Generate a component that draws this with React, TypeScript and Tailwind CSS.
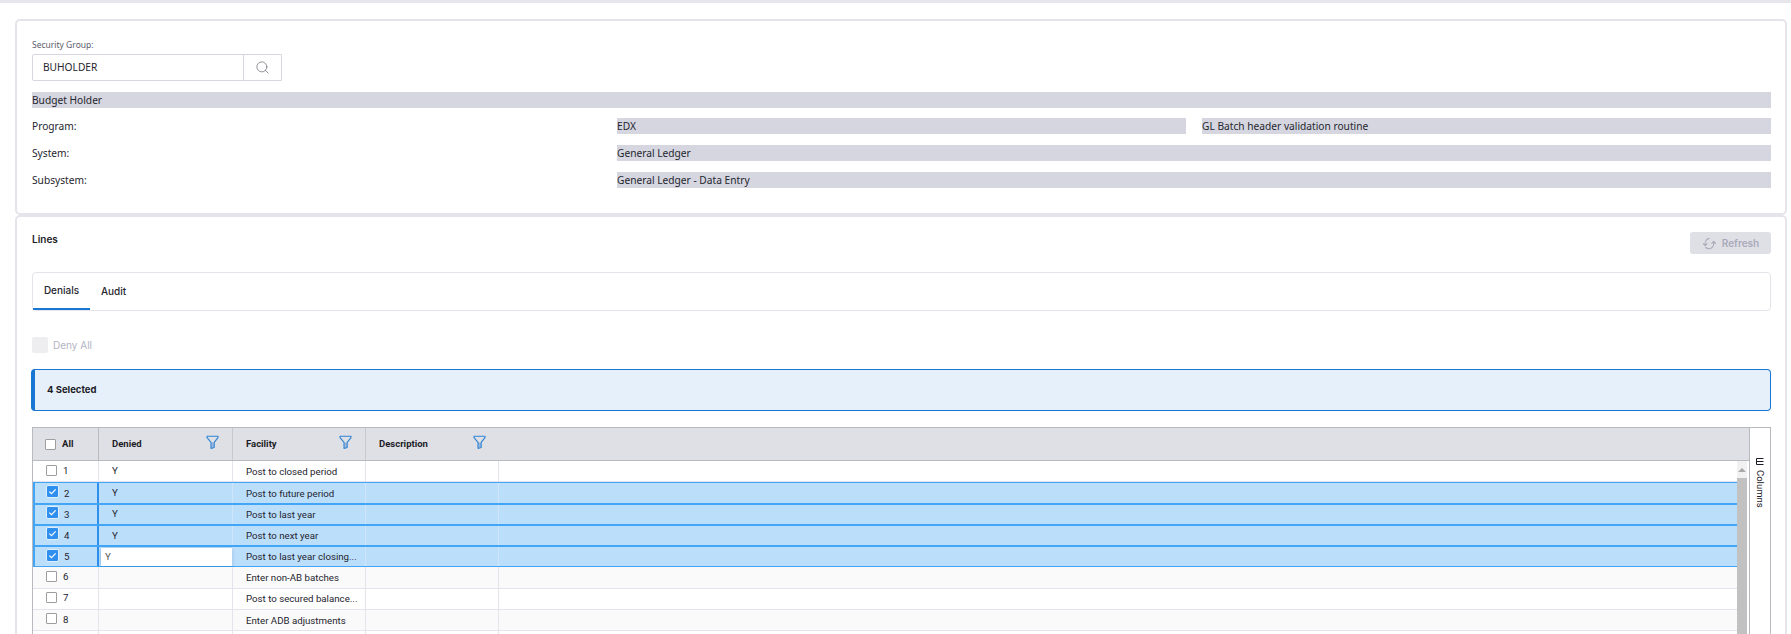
import React from "react";
import { Search } from "lucide-react";

const rows = [
  { n: 1, denied: "Y", fac: "Post to closed period", sel: false },
  { n: 2, denied: "Y", fac: "Post to future period", sel: true },
  { n: 3, denied: "Y", fac: "Post to last year", sel: true },
  { n: 4, denied: "Y", fac: "Post to next year", sel: true },
  { n: 5, denied: "Y", fac: "Post to last year closing...", sel: true, edit: true },
  { n: 6, denied: "", fac: "Enter non-AB batches", sel: false },
  { n: 7, denied: "", fac: "Post to secured balance...", sel: false },
  { n: 8, denied: "", fac: "Enter ADB adjustments", sel: false },
];

function Funnel() {
  return (
    <svg width="13" height="14" viewBox="0 0 13 14" fill="none" className="shrink-0">
      <path d="M5 7.5h3v4.5L5.2 13z" fill="#9db8d8" />
      <path d="M1 1.2h11v1.4L8.2 7.4v5L5 13.4V7.4L1 2.6z" stroke="#2d83d6" strokeWidth="1.1" strokeLinejoin="round" />
    </svg>
  );
}

function RefreshGlyph() {
  return (
    <svg width="15" height="15" viewBox="0 0 15 15" fill="none" stroke="#a9a9ba" strokeWidth="1.1" strokeLinecap="round" strokeLinejoin="round">
      <path d="M3.2 9.5C2.4 6 4.4 3.2 7 2.4" />
      <path d="M1.4 7.6l1.8 2 1.9-1.9" />
      <path d="M11.6 5.5c.9 3.6-1 6.5-3.8 7.2-1.5.3-3-.2-4-1.2" />
      <path d="M9.8 7.3l1.8-1.9 1.8 2" />
    </svg>
  );
}

function ColumnsGlyph() {
  return (
    <svg width="8" height="7" viewBox="0 0 8 7" fill="none" stroke="#1c1c28" strokeWidth="1" className="shrink-0">
      <path d="M.5.5h7M.5 3.5h7M.5 6.5h7M.5.5v6" />
    </svg>
  );
}

function HeadCell({ label, w }: { label: string; w: string }) {
  return (
    <div className={`${w} h-full shrink-0 flex items-center justify-between pl-[13px] pr-[13px] border-r border-[#c8c9d0]`}>
      <span className="text-[9.5px] font-bold text-[#1c1c28] font-['Roboto',sans-serif]">{label}</span>
      <div className="-mt-[5px]"><Funnel /></div>
    </div>
  );
}

function Check({ on }: { on: boolean }) {
  return on ? (
    <span className="w-[11px] h-[11px] rounded-[1px] bg-[#2f8fee] flex items-center justify-center -mt-[3px] shadow-[0_0_0_0.5px_#ffffff]">
      <svg width="9" height="9" viewBox="0 0 10 10" fill="none" stroke="white" strokeWidth="1.3"><path d="M1.5 5.2l2.4 2.2 4.6-4.8" /></svg>
    </span>
  ) : (
    <span className="w-[11px] h-[11px] border border-[#9e9e9e] bg-white rounded-[1px] -mt-[2px] block" />
  );
}

function GridRow({ r }: { r: (typeof rows)[number] }) {
  const line = r.sel ? "border-[#cfe6fa]" : "border-[#e4e5ec]";
  const even = r.n % 2 === 0;
  return (
    <div
      className={`h-[21.25px] shrink-0 flex items-stretch text-[9.7px] text-[#24242e] font-['Roboto',sans-serif] ${
        r.sel
          ? "bg-[#bbdefb] border-y border-[#42a5f5]"
          : even
            ? "bg-[#fafafa] border-b border-[#e4e5ec]"
            : "bg-white border-b border-[#e4e5ec]"
      }`}
    >
      <div className={`w-[66px] shrink-0 flex items-center gap-[6px] ${r.sel ? "pl-[12px] border-l-2 border-l-[#42a5f5] border-r-2 border-r-[#2f8fee]" : "pl-[13px] border-r border-[#e4e5ec]"}`}>
        <Check on={r.sel} />
        <span className={r.sel ? "pt-[2px]" : ""}>{r.n}</span>
      </div>
      <div className={`w-[134px] shrink-0 flex items-center pt-[1px] border-r ${line} ${r.edit ? "pl-[2px] pr-0" : "pl-[13px]"}`}>
        {r.edit ? (
          <span className="w-full h-[18px] bg-white flex items-center pl-[4px] shadow-[0_1px_3px_rgba(33,110,190,0.45)] text-[#555]">Y</span>
        ) : (
          r.denied
        )}
      </div>
      <div className={`w-[133px] shrink-0 flex items-center pt-[2px] pl-[13px] border-r ${line}`}>{r.fac}</div>
      <div className={`w-[133px] shrink-0 border-r ${line}`} />
      <div className="flex-1" />
    </div>
  );
}

function Bar({ text, cls = "" }: { text: string; cls?: string }) {
  return <div className={`h-[16px] bg-[#d5d6e0] text-[10.2px] leading-[16px] text-[#26262e] ${cls}`}>{text}</div>;
}

function InfoRow({ label, children, first }: { label: string; children: React.ReactNode; first?: boolean }) {
  return (
    <div className={`flex items-center h-[16px] text-[10.2px] text-[#26262e] ${first ? "mt-[10px]" : "mt-[11px]"}`}>
      <div className="w-[585px] shrink-0 pt-[1px]">{label}</div>
      <div className="flex-1 flex gap-[16px]">{children}</div>
    </div>
  );
}

export default function App() {
  return (
    <div className="h-[634px] w-[1791px] overflow-hidden bg-white border-t-[3px] border-[#e6e6ec] font-['Noto_Sans',sans-serif]">
      <div className="pl-[15px] pr-[4px] pt-[16px]">
        <section className="h-[196px] border-2 border-[#e4e4ea] rounded-[5px] pl-[15px] pr-[14px] pt-[18px]">
          <div className="text-[8.5px] leading-[12px] text-[#5c5c6c]">Security Group:</div>
          <div className="mt-[3px] w-[250px] h-[27px] flex border border-[#d5d6e0] rounded-l-[2px]">
            <div className="flex-1 pl-[10px] text-[10.2px] leading-[25px] text-[#26262e]">BUHOLDER</div>
            <div className="w-[38px] border-l border-[#d5d6e0] flex items-center justify-center text-[#62626e]">
              <Search size={15} strokeWidth={1.1} />
            </div>
          </div>
          <Bar text="Budget Holder" cls="mt-[11px]" />
          <InfoRow first label="Program:">
            <Bar text="EDX" cls="w-[569px]" />
            <Bar text="GL Batch header validation routine" cls="flex-1" />
          </InfoRow>
          <InfoRow label="System:"><Bar text="General Ledger" cls="flex-1" /></InfoRow>
          <InfoRow label="Subsystem:"><Bar text="General Ledger - Data Entry" cls="flex-1" /></InfoRow>
        </section>

        <section className="h-[500px] mt-0 border-2 border-[#e4e4ea] rounded-[5px] pl-[15px] pr-[14px] pt-[14px]">
          <div className="flex items-start justify-between h-[23px]">
            <div className="text-[10px] font-semibold text-[#1c1c28] leading-[16px] font-['Inter',sans-serif]">Lines</div>
            <button className="w-[81px] h-[22px] mt-[1px] bg-[#dfe0e5] rounded-[3px] flex items-center justify-center gap-[5px] text-[10px] font-semibold text-[#a9a9ba] font-['Inter',sans-serif]">
              <RefreshGlyph />
              Refresh
            </button>
          </div>
          <div className="mt-[18px] h-[39px] border border-[#e4e4ea] rounded-[4px] flex text-[10px] font-medium text-[#26262e] font-['Inter',sans-serif]">
            <div className="w-[57px] flex items-center justify-center border-b-2 border-[#1976d2]">Denials</div>
            <div className="pl-[11px] flex items-center">Audit</div>
          </div>
          <div className="mt-[26px] h-[16px] flex items-center gap-[5px]">
            <span className="w-[16px] h-[16px] rounded-[2px] bg-[#eeeef1]" />
            <span className="text-[10px] text-[#b3b3c2] font-['Inter',sans-serif]">Deny All</span>
          </div>
          <div className="mt-[16px] h-[42px] -ml-[1px] bg-[#e6f0fa] border border-[#1976d2] border-l-4 rounded-[4px] flex items-center pl-[12px] text-[9.5px] font-bold text-[#1c1c28] font-['Inter',sans-serif]">
            4 Selected
          </div>
          <div className="mt-[16px] h-[300px] flex border border-[#b9bac0] border-b-0">
            <div className="flex-1 min-w-0 flex flex-col">
              <div className="h-[33px] shrink-0 bg-[#dfe0e5] border-b border-[#b9bac0] flex items-center">
                <div className="w-[66px] h-full shrink-0 flex items-center gap-[6px] pl-[12px] border-r border-[#b9bac0]">
                  <span className="w-[11px] h-[11px] border border-[#9e9e9e] bg-white rounded-[1px]" />
                  <span className="text-[9.5px] font-bold text-[#1c1c28] font-['Roboto',sans-serif]">All</span>
                </div>
                <HeadCell label="Denied" w="w-[134px]" />
                <HeadCell label="Facility" w="w-[133px]" />
                <HeadCell label="Description" w="w-[133px] border-r-0" />
              </div>
              <div className="flex-1 flex min-h-0">
                <div className="flex-1 min-w-0 flex flex-col overflow-hidden">
                  {rows.map((r) => <GridRow key={r.n} r={r} />)}
                  <div className="h-[21.25px] shrink-0 flex bg-white">
                    <div className="w-[66px] border-r border-[#e4e5ec]" />
                    <div className="w-[134px] border-r border-[#e4e5ec]" />
                    <div className="w-[133px] border-r border-[#e4e5ec]" />
                    <div className="w-[133px] border-r border-[#e4e5ec]" />
                  </div>
                </div>
                <div className="w-[12px] shrink-0 flex">
                  <div className="w-[10px] flex flex-col bg-[#f1f1f1]">
                    <div className="h-[17px] flex items-center justify-center">
                      <span className="w-0 h-0 border-x-[4px] border-x-transparent border-b-[4px] border-b-[#a8a8a8]" />
                    </div>
                    <div className="flex-1 bg-[#c1c1c1]" />
                  </div>
                </div>
              </div>
            </div>
            <div className="w-[21px] shrink-0 border-l border-[#b9bac0] flex justify-center pt-[30px] bg-white">
              <div className="[writing-mode:vertical-rl] flex items-center gap-[5px] text-[9.5px] text-[#1c1c28] font-['Roboto',sans-serif] h-fit">
                <ColumnsGlyph />
                Columns
              </div>
            </div>
          </div>
        </section>
      </div>
    </div>
  );
}
